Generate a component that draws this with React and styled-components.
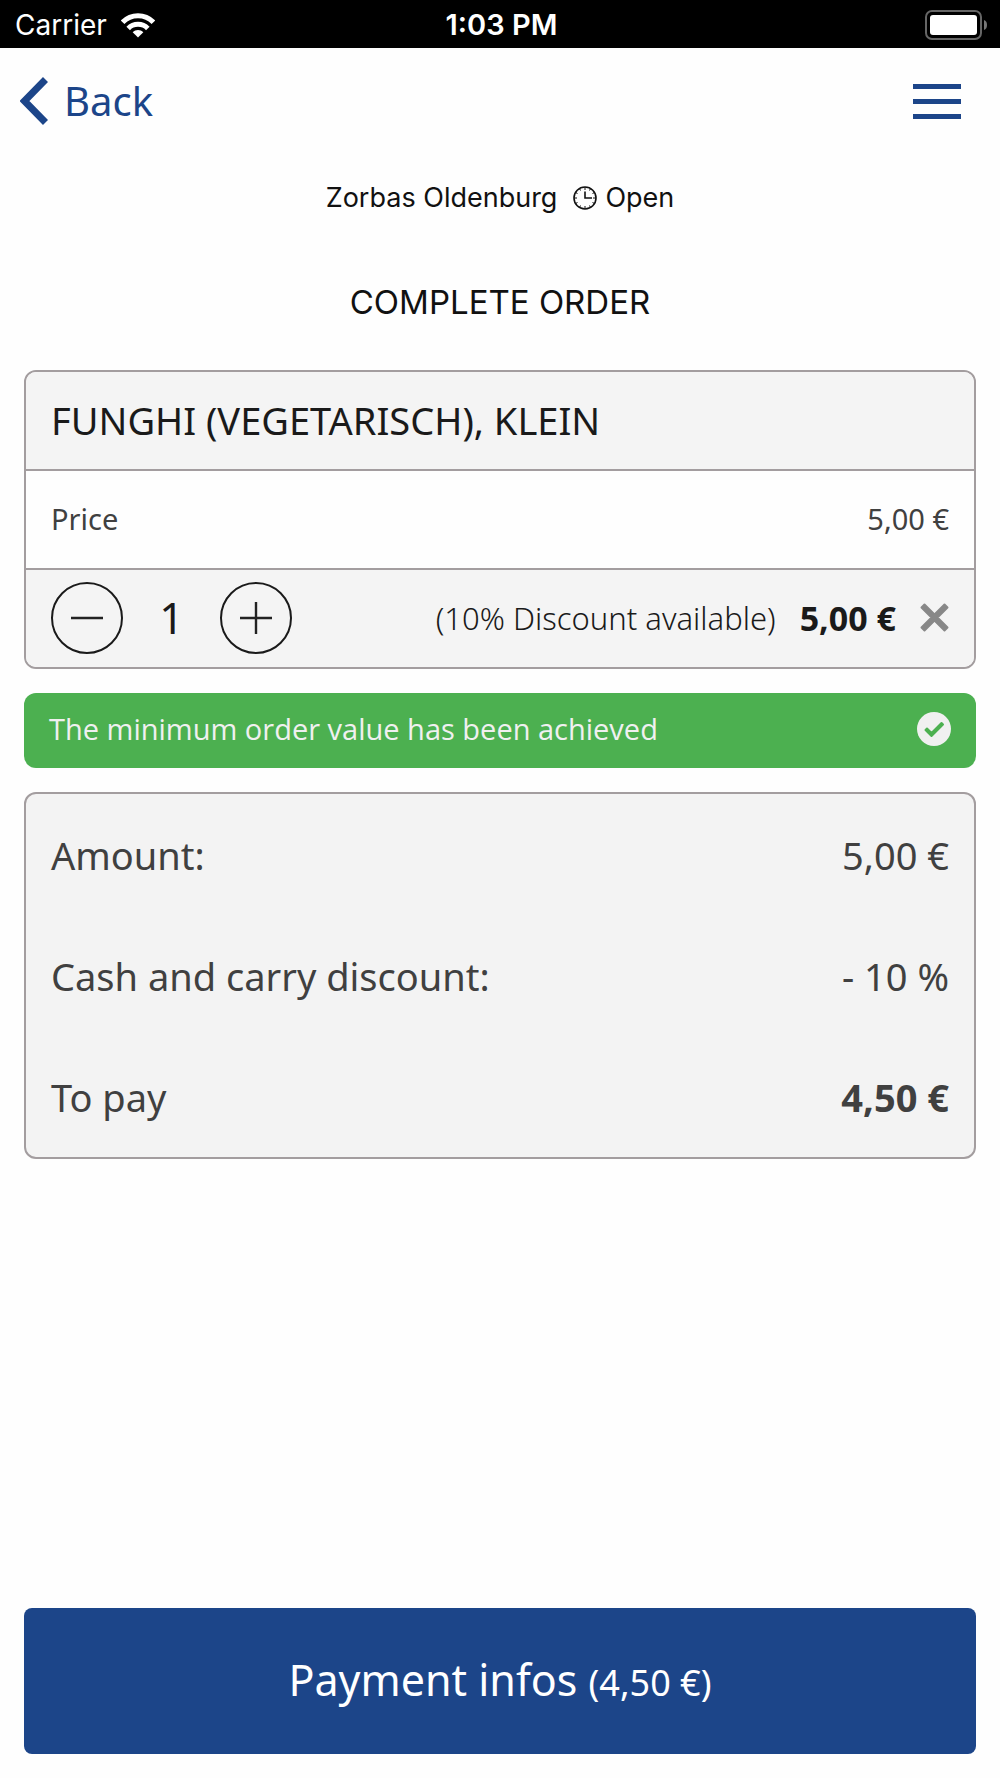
import React, { useState } from "react";
import styled, { createGlobalStyle } from "styled-components";

const system = `Inter, "Liberation Sans", sans-serif`;
const brand = "#1c4589";
const line = "#a39d9f";

const GlobalStyle = createGlobalStyle`
  * { box-sizing: border-box; }
  body { margin: 0; background: #fefefe; font-family: "Noto Sans", "Open Sans", sans-serif; }
  button { font-family: inherit; border: 0; padding: 0; background: none; cursor: pointer; }
  svg { display: block; flex: none; }
`;

const Screen = styled.div`
  display: flex;
  flex-direction: column;
  min-height: 100vh;
`;

const StatusBar = styled.div`
  display: grid;
  grid-template-columns: 1fr auto 1fr;
  align-items: center;
  height: 48px;
  padding: 2px 12px 0 15px;
  background: #000;
  color: #fff;
  font: 400 28px/32px ${system};
`;

const Carrier = styled.span`
  display: flex;
  align-items: center;
  gap: 14px;
`;

const Clock = styled.time`
  font-size: 29px;
  font-weight: 600;
`;

const Battery = styled.svg`
  justify-self: end;
`;

const NavBar = styled.nav`
  display: flex;
  align-items: center;
  justify-content: space-between;
  height: 106px;
  padding: 0 39px 0 20px;
`;

const BackLink = styled.a`
  display: flex;
  align-items: center;
  gap: 16px;
  color: ${brand};
  font-size: 40px;
  line-height: 56px;
  text-decoration: none;
`;

const MenuButton = styled.button`
  display: grid;
  gap: 10px;
  width: 48px;

  span { height: 5px; background: ${brand}; }
`;

const Venue = styled.div`
  display: flex;
  align-items: center;
  justify-content: center;
  height: 88px;
  color: #111;
  font: 400 27px/36px ${system};
`;

const OpenState = styled.span`
  display: flex;
  align-items: center;
  gap: 8px;
  margin-left: 16px;
`;

const Title = styled.h1`
  margin: 0;
  padding: 38px 0 44px;
  color: #111;
  font: 400 33px/44px ${system};
  text-align: center;
`;

const Content = styled.main`
  display: flex;
  flex: 1;
  flex-direction: column;
  gap: 24px;
  padding: 2px 24px 48px;
`;

const Card = styled.section`
  border: 2px solid ${line};
  border-radius: 12px;
  background: ${(p) => p.$fill};
  overflow: hidden;
`;

const Row = styled.div`
  display: flex;
  align-items: center;
  justify-content: space-between;
  min-height: ${(p) => p.$height}px;
  padding: 0 25px 2px;
  color: ${(p) => p.$color || "#404040"};
  background: ${(p) => p.$fill || "transparent"};
  font-size: ${(p) => p.$size}px;
  border-top: ${(p) => (p.$divided ? `2px solid ${line}` : 0)};
`;

const SummaryRow = styled(Row)`
  padding-bottom: 0;
`;

const ItemName = styled.h2`
  margin: 0;
  font-size: 38px;
  font-weight: 400;
`;

const Stepper = styled.div`
  display: flex;
  align-items: center;
`;

const RoundButton = styled.button`
  display: grid;
  place-items: center;
  width: 72px;
  height: 72px;
  border: 2px solid #1a1a1a;
  border-radius: 50%;
`;

const Quantity = styled.output`
  width: 97px;
  font-size: 43px;
  line-height: 56px;
  text-align: center;
`;

const LineTotal = styled.div`
  display: flex;
  align-items: center;
  gap: 24px;
`;

const Discount = styled.span`
  font-size: 31px;
  font-weight: 300;
`;

const RemoveButton = styled.button`
  display: grid;
`;

const Notice = styled.div`
  display: flex;
  align-items: center;
  justify-content: space-between;
  min-height: 75px;
  padding: 0 25px 3px;
  border-radius: 12px;
  background: #4cb050;
  color: #f0f0f0;
  font-family: "Open Sans", "Noto Sans", sans-serif;
  font-size: 29px;
  line-height: 40px;
`;

const Summary = styled.dl`
  margin: 0;

  dt, dd { margin: 0; }
`;

const Footer = styled.footer`
  padding: 0 24px 24px;
`;

const PayButton = styled.button`
  width: 100%;
  height: 146px;
  border-radius: 8px;
  background: ${brand};
  color: #fff;
  font-size: 43px;
  line-height: 60px;

  small { font-size: 36px; }
`;

const euro = (value) => `${value.toFixed(2).replace(".", ",")} €`;

export default function App() {
  const [count, setCount] = useState(1);
  const amount = count * 5;
  const toPay = amount * 0.9;

  return (
    <Screen>
      <GlobalStyle />
      <StatusBar>
        <Carrier>
          Carrier
          <svg width="34" height="25" viewBox="0 0 34 25" fill="none" stroke="#fff" strokeWidth="5">
            <path d="M1.6 9.3C10 .6 24 .6 32.400 9.300" />
            <path d="M7.200 15.400C12.500 10 21.500 10 26.800 15.400" />
            <path d="M17 24.500l-5.300-5.300c3-2.900 7.600-2.900 10.600 0z" fill="#fff" stroke="none" />
          </svg>
        </Carrier>
        <Clock>1:03 PM</Clock>
        <Battery width="63" height="30" viewBox="0 0 63 30">
          <rect x="1" y="1" width="55" height="28" rx="6" fill="none" stroke="#666" strokeWidth="2" />
          <rect x="5" y="5" width="47" height="20" rx="3" fill="#fff" />
          <path d="M59 10c4 1 4 9 0 10z" fill="#777" />
        </Battery>
      </StatusBar>

      <NavBar>
        <BackLink href="#back">
          <svg width="28" height="48" viewBox="0 0 28 48" fill="none" stroke={brand} strokeWidth="7">
            <path d="M25.500 2.500L4.500 24 25.500 45.500" />
          </svg>
          Back
        </BackLink>
        <MenuButton aria-label="Menu"><span /><span /><span /></MenuButton>
      </NavBar>

      <Venue>
        Zorbas Oldenburg
        <OpenState>
          <svg width="24" height="24" viewBox="0 0 24 24" fill="none" stroke="#111" strokeWidth="1.600">
            <circle cx="12" cy="12" r="11" />
            <path d="M12 5.500V12h7" />
            <path strokeWidth="1" d="M12 1v3M12 20v3M1 12h3M20 12h3M6.500 2.500l1 2M17.500 2.500l-1 2M2.500 6.500l2 1M21.500 6.500l-2 1M2.500 17.500l2-1M21.500 17.500l-2-1M6.500 21.500l1-2M17.500 21.500l-1-2" />
          </svg>
          Open
        </OpenState>
      </Venue>
      <Title>COMPLETE ORDER</Title>

      <Content>
        <Card $fill="#fefefe">
          <Row $height={97} $fill="#f4f4f4" $color="#1a1a1a">
            <ItemName>FUNGHI (VEGETARISCH), KLEIN</ItemName>
          </Row>
          <Row $height={99} $size={29} $divided>
            <span>Price</span>
            <span>{euro(5)}</span>
          </Row>
          <Row $height={99} $size={34} $fill="#f4f4f4" $color="#1a1a1a" $divided>
            <Stepper>
              <RoundButton aria-label="Decrease quantity" onClick={() => setCount(Math.max(1, count - 1))}>
                <svg width="34" height="34" viewBox="0 0 34 34" stroke="#222" strokeWidth="2.400">
                  <path d="M1 17h32" />
                </svg>
              </RoundButton>
              <Quantity>{count}</Quantity>
              <RoundButton aria-label="Increase quantity" onClick={() => setCount(count + 1)}>
                <svg width="34" height="34" viewBox="0 0 34 34" stroke="#222" strokeWidth="2.400">
                  <path d="M1 17h32M17 1v32" />
                </svg>
              </RoundButton>
            </Stepper>
            <LineTotal>
              <Discount>(10% Discount available)</Discount>
              <strong>{euro(amount)}</strong>
              <RemoveButton aria-label="Remove item">
                <svg width="29" height="29" viewBox="0 0 29 29" fill="#888" stroke="#888" strokeWidth="2" strokeLinejoin="round">
                  <path d="M4.500 1.500L14.500 11.500 24.500 1.500 27.500 4.500 17.500 14.500 27.500 24.500 24.500 27.500 14.500 17.500 4.500 27.500 1.500 24.500 11.500 14.500 1.500 4.500z" />
                </svg>
              </RemoveButton>
            </LineTotal>
          </Row>
        </Card>

        <Notice role="status">
          The minimum order value has been achieved
          <svg width="34" height="34" viewBox="0 0 34 34">
            <circle cx="17" cy="17" r="17" fill="#f0f0f0" />
            <path d="M10 16.500l4.500 4.500L24.500 11l1.500 1.500-11.500 11.500-6-6z" fill="#4cb050" stroke="#4cb050" strokeWidth="2" strokeLinejoin="round" />
          </svg>
        </Notice>

        <Card as={Summary} $fill="#f3f3f3">
          <SummaryRow $height={121} $size={38}>
            <dt>Amount:</dt>
            <dd>{euro(amount)}</dd>
          </SummaryRow>
          <SummaryRow $height={121} $size={38}>
            <dt>Cash and carry discount:</dt>
            <dd>- 10 %</dd>
          </SummaryRow>
          <SummaryRow $height={121} $size={38}>
            <dt>To pay</dt>
            <dd><strong>{euro(toPay)}</strong></dd>
          </SummaryRow>
        </Card>
      </Content>

      <Footer>
        <PayButton>Payment infos <small>({euro(toPay)})</small></PayButton>
      </Footer>
    </Screen>
  );
}
